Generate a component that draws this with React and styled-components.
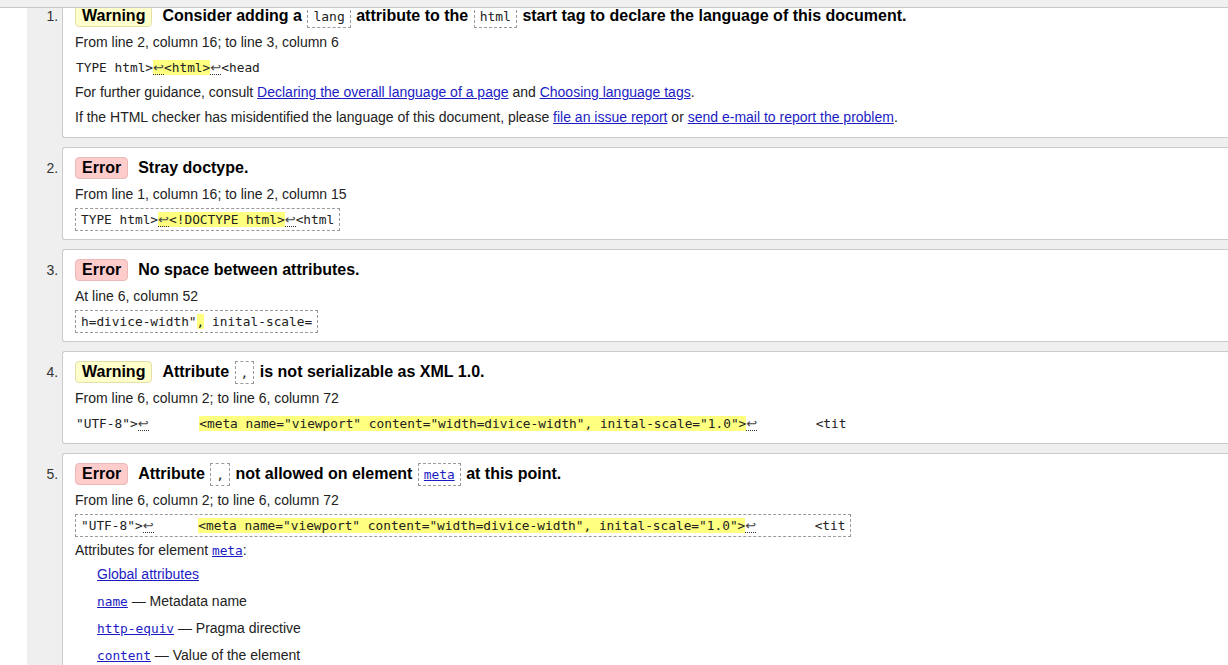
import React from 'react';
import styled, { createGlobalStyle } from 'styled-components';

const GlobalStyle = createGlobalStyle`
  html, body { margin: 0; padding: 0; height: 100%; overflow: hidden; background: #fff; }
  body { font-family: "Liberation Sans", Arial, sans-serif; font-size: 14px; color: #222; }
`;

const MONO = `"DejaVu Sans Mono", "Liberation Mono", monospace`;

const TopBar = styled.div`
  height: 7px;
  background: #f0f0f0;
  border-bottom: 1px solid #c8c8c8;
`;

const Viewport = styled.div`
  height: calc(100vh - 8px);
  overflow: hidden;
`;

const MessageList = styled.ol`
  margin: -13px 0 0 27px;
  padding: 0 0 40px 35px;
  background: #efefef;
  list-style: decimal;
`;

const Message = styled.li`
  background: #fff;
  border: 1px solid #cbcbcb;
  border-right: none;
  border-radius: 3px 0 0 3px;
  padding: 9px 0 7px 12px;
  margin-bottom: 9px;
  &::marker { color: #333; font-size: 14px; font-weight: normal; }
`;

const Title = styled.p`
  margin: 0 0 3px;
  font-weight: bold;
  font-size: 16px;
  line-height: 22px;
  color: #000;
`;

const Badge = styled.strong`
  display: inline-block;
  vertical-align: top;
  padding: 0 6px;
  line-height: 20px;
  margin-right: 10px;
  border-radius: 4px;
  border: 1px solid ${p => (p.$kind === 'error' ? '#ecb9b9' : '#e4e0a8')};
  background: ${p => (p.$kind === 'error' ? '#ffcccc' : '#ffffcc')};
`;

const TitleCode = styled.code`
  display: inline-block;
  vertical-align: top;
  font-family: ${MONO};
  font-size: 13px;
  font-weight: normal;
  color: #222;
  line-height: 21px;
  padding: 0 5px;
  margin: 0 1px -1px;
  border: 1px dashed #9a9a9a;
`;

const Line = styled.p`
  margin: 0;
  line-height: 25px;
  color: #222;
`;

const CodeLine = styled.p`
  margin: 0;
  line-height: 25px;
  font-family: ${MONO};
  font-size: 12.8px;
  white-space: pre;
  tab-size: 8;
  color: #222;
  padding-left: ${p => (p.$boxed ? '0' : '1px')};
`;

const Extract = styled.code`
  font-family: inherit;
  padding: 3px 5px;
  border: 1px dashed #9a9a9a;
`;

const Mark = styled.mark`
  background: #ffff80;
  color: inherit;
`;

const Newline = styled.span`
  display: inline-block;
  width: 11px;
  text-align: center;
  line-height: 13px;
  font-family: "DejaVu Sans", sans-serif;
  font-size: 13px;
  color: #444;
  border-bottom: 1px dotted #333;
`;

const Link = styled.a`
  color: #1c1cc4;
  text-decoration: underline;
`;

const CodeLink = styled.a`
  font-family: ${MONO};
  font-size: 12.8px;
  line-height: 1;
  color: #1c1cc4;
  text-decoration: underline;
`;

const AttrList = styled.div`
  display: flex;
  flex-direction: column;
  gap: 5px;
  padding-left: 22px;
`;

const AttrRow = styled.div`
  height: 22px;
  line-height: 22px;
  color: #222;
`;

const NL = () => <Newline>↩</Newline>;

export default function App() {
  return (
    <>
      <GlobalStyle />
      <TopBar />
      <Viewport>
        <MessageList>
          <Message>
            <Title>
              <Badge $kind="warning">Warning</Badge>
              Consider adding a <TitleCode>lang</TitleCode> attribute to the <TitleCode>html</TitleCode> start tag to declare the language of this document.
            </Title>
            <Line>From line 2, column 16; to line 3, column 6</Line>
            <CodeLine>TYPE html&gt;<Mark><NL />&lt;html&gt;</Mark><NL />&lt;head</CodeLine>
            <Line>
              For further guidance, consult <Link href="#">Declaring the overall language of a page</Link> and <Link href="#">Choosing language tags</Link>.
            </Line>
            <Line>
              If the HTML checker has misidentified the language of this document, please <Link href="#">file an issue report</Link> or <Link href="#">send e-mail to report the problem</Link>.
            </Line>
          </Message>

          <Message>
            <Title>
              <Badge $kind="error">Error</Badge>
              Stray doctype.
            </Title>
            <Line>From line 1, column 16; to line 2, column 15</Line>
            <CodeLine $boxed>
              <Extract>TYPE html&gt;<Mark><NL />&lt;!DOCTYPE html&gt;</Mark><NL />&lt;html</Extract>
            </CodeLine>
          </Message>

          <Message>
            <Title>
              <Badge $kind="error">Error</Badge>
              No space between attributes.
            </Title>
            <Line>At line 6, column 52</Line>
            <CodeLine $boxed>
              <Extract>h=divice-width"<Mark>,</Mark> inital-scale=</Extract>
            </CodeLine>
          </Message>

          <Message>
            <Title>
              <Badge $kind="warning">Warning</Badge>
              Attribute <TitleCode>,</TitleCode> is not serializable as XML 1.0.
            </Title>
            <Line>From line 6, column 2; to line 6, column 72</Line>
            <CodeLine>{'"UTF-8">'}<NL />{'\t'}<Mark>{'<meta name="viewport" content="width=divice-width", inital-scale="1.0">'}</Mark><NL />{'\t<tit'}</CodeLine>
          </Message>

          <Message>
            <Title>
              <Badge $kind="error">Error</Badge>
              Attribute <TitleCode>,</TitleCode> not allowed on element <TitleCode><CodeLink href="#">meta</CodeLink></TitleCode> at this point.
            </Title>
            <Line>From line 6, column 2; to line 6, column 72</Line>
            <CodeLine $boxed>
              <Extract>{'"UTF-8">'}<NL />{'\t'}<Mark>{'<meta name="viewport" content="width=divice-width", inital-scale="1.0">'}</Mark><NL />{'\t<tit'}</Extract>
            </CodeLine>
            <Line>Attributes for element <CodeLink href="#">meta</CodeLink>:</Line>
            <AttrList>
              <AttrRow><Link href="#">Global attributes</Link></AttrRow>
              <AttrRow><CodeLink href="#">name</CodeLink> — Metadata name</AttrRow>
              <AttrRow><CodeLink href="#">http-equiv</CodeLink> — Pragma directive</AttrRow>
              <AttrRow><CodeLink href="#">content</CodeLink> — Value of the element</AttrRow>
            </AttrList>
          </Message>
        </MessageList>
      </Viewport>
    </>
  );
}
